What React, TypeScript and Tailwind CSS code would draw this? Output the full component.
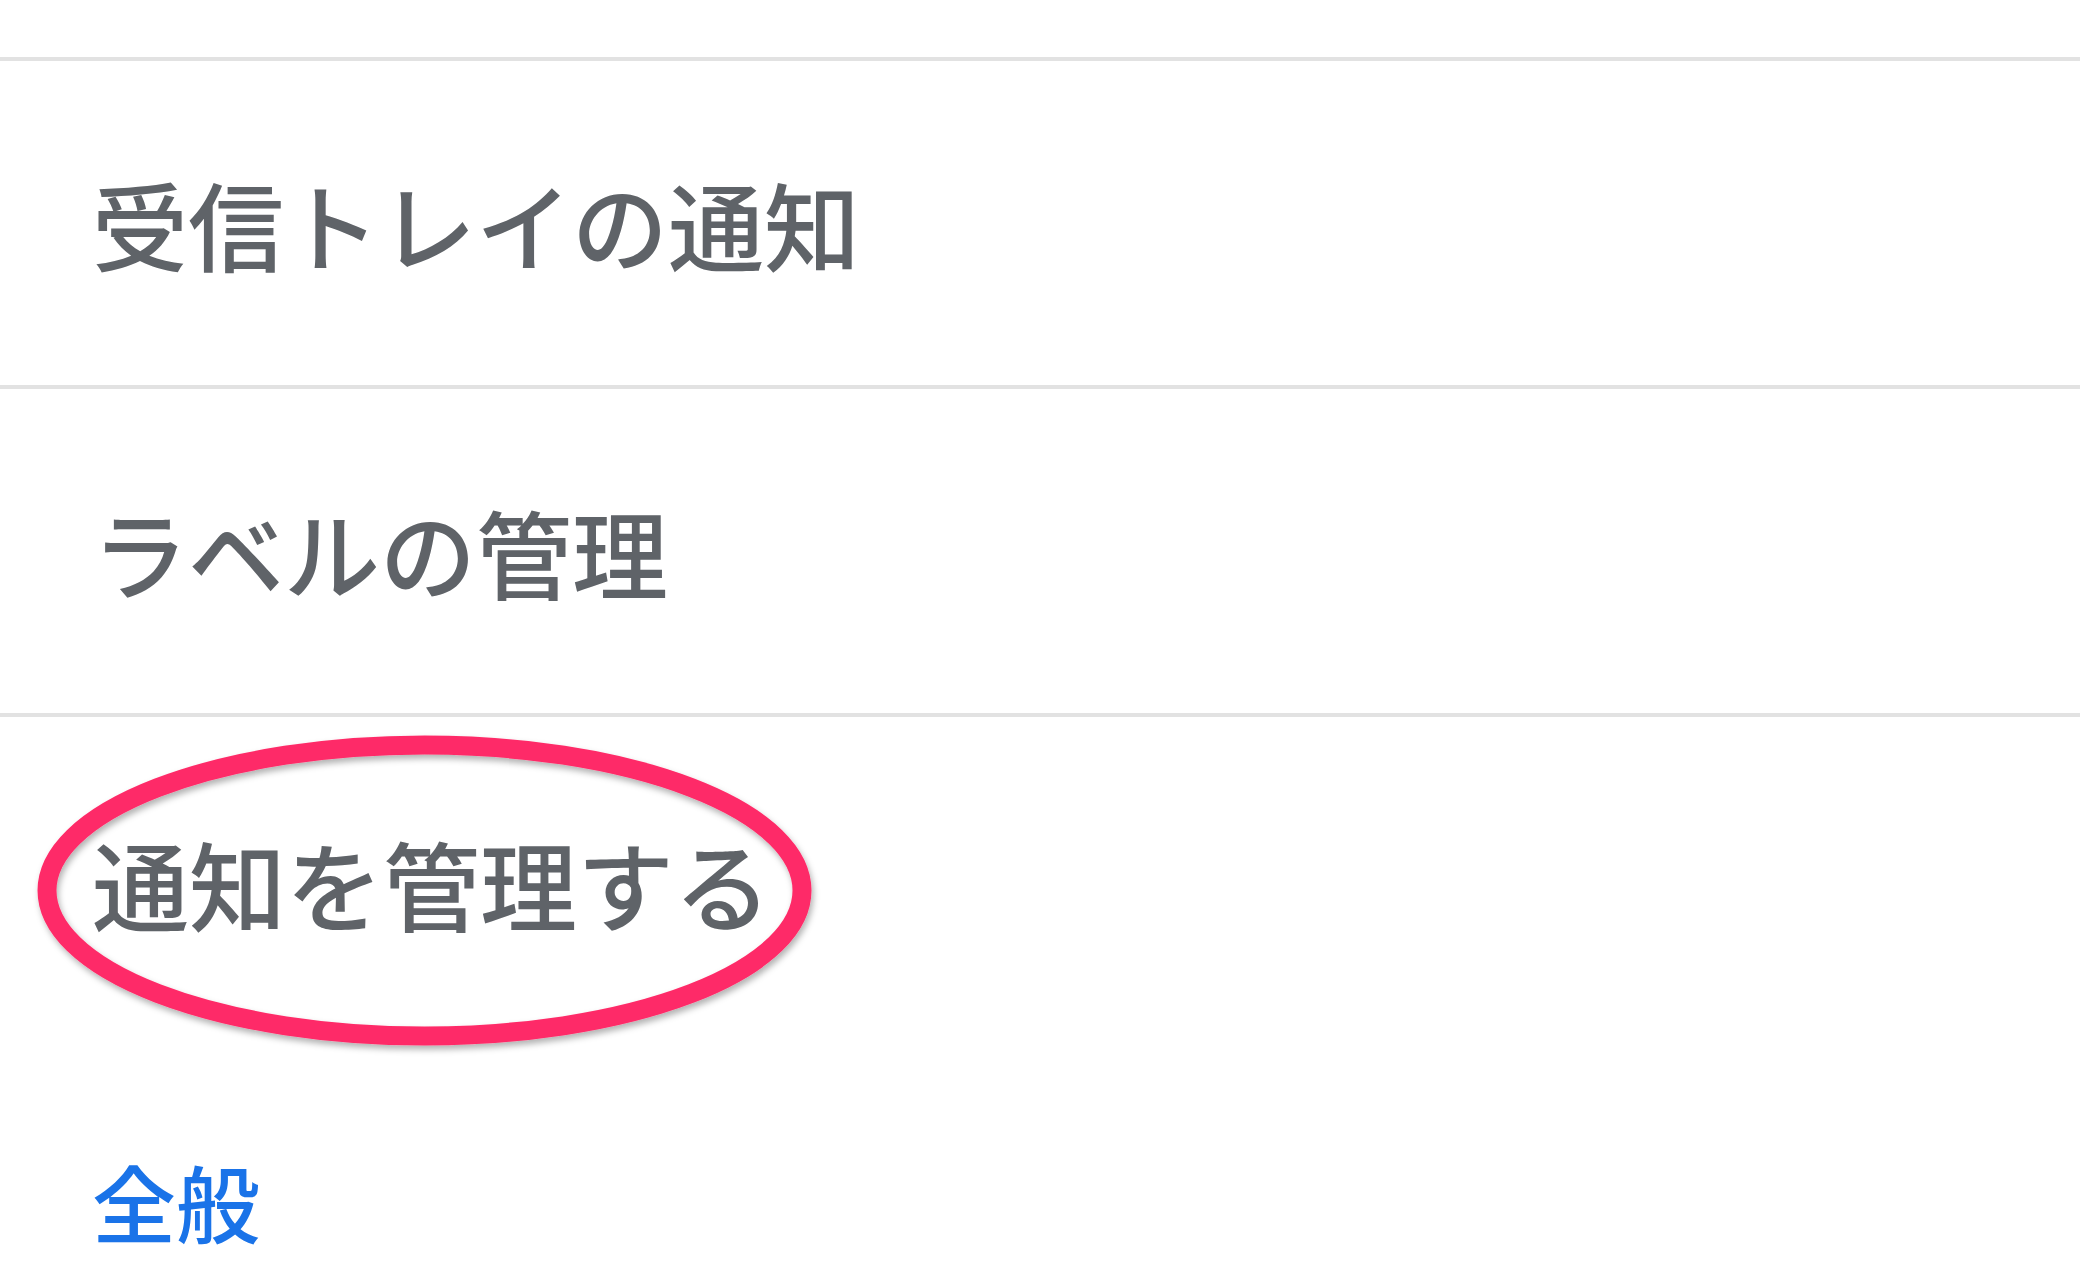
export default function App() {
  const font = { fontFamily: '"Noto Sans CJK JP", "Noto Sans", sans-serif' };
  return (
    <div className="w-[2080px] h-[1282px] bg-white overflow-hidden" style={font}>
      <div className="h-[61px] border-b-4 border-[#e2e2e2]" />
      <div className="h-[328px] border-b-4 border-[#e2e2e2] flex items-center pl-[92px]">
        <span className="text-[96px] font-medium leading-none text-[#5f6368]">受信トレイの通知</span>
      </div>
      <div className="h-[328px] border-b-4 border-[#e2e2e2] flex items-center pl-[92px]">
        <span className="text-[96px] font-medium leading-none text-[#5f6368]">ラベルの管理</span>
      </div>
      <div className="relative h-[328px] flex items-center pl-[92px]">
        <span className="text-[97px] font-medium leading-none text-[#5f6368]">通知を管理する</span>
        <svg className="absolute left-0 top-0" width="860" height="360" viewBox="0 0 860 360">
          <defs>
            <filter id="sh" x="-10%" y="-10%" width="120%" height="130%">
              <feDropShadow dx="2" dy="4" stdDeviation="3" floodColor="#000" floodOpacity="0.3" />
            </filter>
          </defs>
          <ellipse cx="424.5" cy="173.5" rx="377.5" ry="145.5" fill="none" stroke="#fe2c68" strokeWidth="19" filter="url(#sh)" />
        </svg>
      </div>
      <div className="pt-[114px] pl-[92px]">
        <span className="text-[84px] font-medium leading-none text-[#1a73e8]">全般</span>
      </div>
    </div>
  );
}
